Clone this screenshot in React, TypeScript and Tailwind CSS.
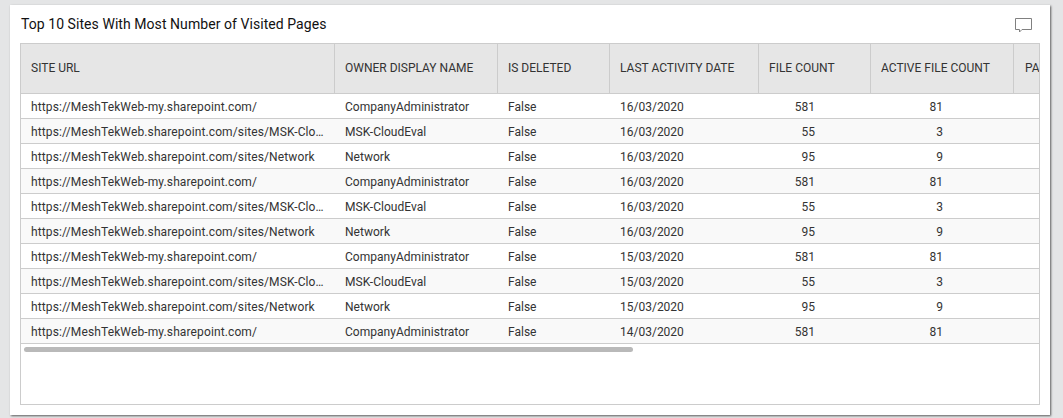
const rows = [
  ["https://MeshTekWeb-my.sharepoint.com/", "CompanyAdministrator", "16/03/2020", "581", "81"],
  ["https://MeshTekWeb.sharepoint.com/sites/MSK-CloudEval", "MSK-CloudEval", "16/03/2020", "55", "3"],
  ["https://MeshTekWeb.sharepoint.com/sites/Network", "Network", "16/03/2020", "95", "9"],
  ["https://MeshTekWeb-my.sharepoint.com/", "CompanyAdministrator", "16/03/2020", "581", "81"],
  ["https://MeshTekWeb.sharepoint.com/sites/MSK-CloudEval", "MSK-CloudEval", "16/03/2020", "55", "3"],
  ["https://MeshTekWeb.sharepoint.com/sites/Network", "Network", "16/03/2020", "95", "9"],
  ["https://MeshTekWeb-my.sharepoint.com/", "CompanyAdministrator", "15/03/2020", "581", "81"],
  ["https://MeshTekWeb.sharepoint.com/sites/MSK-CloudEval", "MSK-CloudEval", "15/03/2020", "55", "3"],
  ["https://MeshTekWeb.sharepoint.com/sites/Network", "Network", "15/03/2020", "95", "9"],
  ["https://MeshTekWeb-my.sharepoint.com/", "CompanyAdministrator", "14/03/2020", "581", "81"],
];

const headers = [
  ["SITE URL", "w-[314px]"],
  ["OWNER DISPLAY NAME", "w-[163px]"],
  ["IS DELETED", "w-[112px]"],
  ["LAST ACTIVITY DATE", "w-[149px]"],
  ["FILE COUNT", "w-[112px]"],
  ["ACTIVE FILE COUNT", "w-[143px]"],
];

export default function App() {
  return (
    <div className="h-[418px] w-[1063px] overflow-hidden bg-[#e4e5e6] pl-[10px] pt-[5px] font-['Roboto',sans-serif] text-[#333333]">
      <div className="flex h-[410px] w-[1040px] flex-col bg-white px-[10px] pb-[10px] shadow-[1px_1px_2px_rgba(0,0,0,0.6)]">
        <div className="flex h-[38px] shrink-0 items-start justify-between">
          <h1 className="pl-[1px] pt-[11px] text-[14px] font-normal leading-[17px] tracking-[0.06px] text-[#111111]">
            Top 10 Sites With Most Number of Visited Pages
          </h1>
          <svg width="18" height="18" viewBox="0 0 18 18" fill="none" className="mr-[7px] mt-[12px]" aria-hidden="true">
            <path d="M0.5 1.5H16.5V12.5H7L4.5 15V12.5H0.5Z" stroke="#808080" strokeWidth="1" />
          </svg>
        </div>
        <div className="flex min-h-0 flex-1 flex-col overflow-hidden border border-[#cccccc]">
          <div className="flex h-[50px] w-[1060px] shrink-0 border-b border-[#cccccc] bg-[#e6e6e6] text-[12px]">
            {headers.map(([label, width]) => (
              <div key={label} className={`${width} flex shrink-0 items-center border-r border-[#cccccc] pb-[2px] pl-[10px]`}>
                {label}
              </div>
            ))}
            <div className="flex shrink-0 items-center pb-[2px] pl-[11px]">PAGE COUNT</div>
          </div>
          {rows.map((row, i) => (
            <div
              key={i}
              className={`flex h-[25px] shrink-0 items-center border-b border-[#cccccc] pt-[2px] text-[12px] ${i % 2 === 1 ? "bg-[#f9f9f9]" : "bg-white"}`}
            >
              <div className="w-[314px] shrink-0 truncate pl-[10px] pr-[11px] tracking-[0.12px]">{row[0]}</div>
              <div className="w-[163px] shrink-0 truncate pl-[10px] tracking-[0.03px]">{row[1]}</div>
              <div className="w-[112px] shrink-0 pl-[10px]">False</div>
              <div className="w-[149px] shrink-0 pl-[10px]">{row[2]}</div>
              <div className="w-[112px] shrink-0 pr-[56px] text-right">{row[3]}</div>
              <div className="w-[143px] shrink-0 pr-[71px] text-right">{row[4]}</div>
            </div>
          ))}
          <div className="ml-[3px] mt-[3px] h-[5px] w-[609px] shrink-0 rounded-full bg-[#b9b9b9]" />
        </div>
      </div>
    </div>
  );
}
